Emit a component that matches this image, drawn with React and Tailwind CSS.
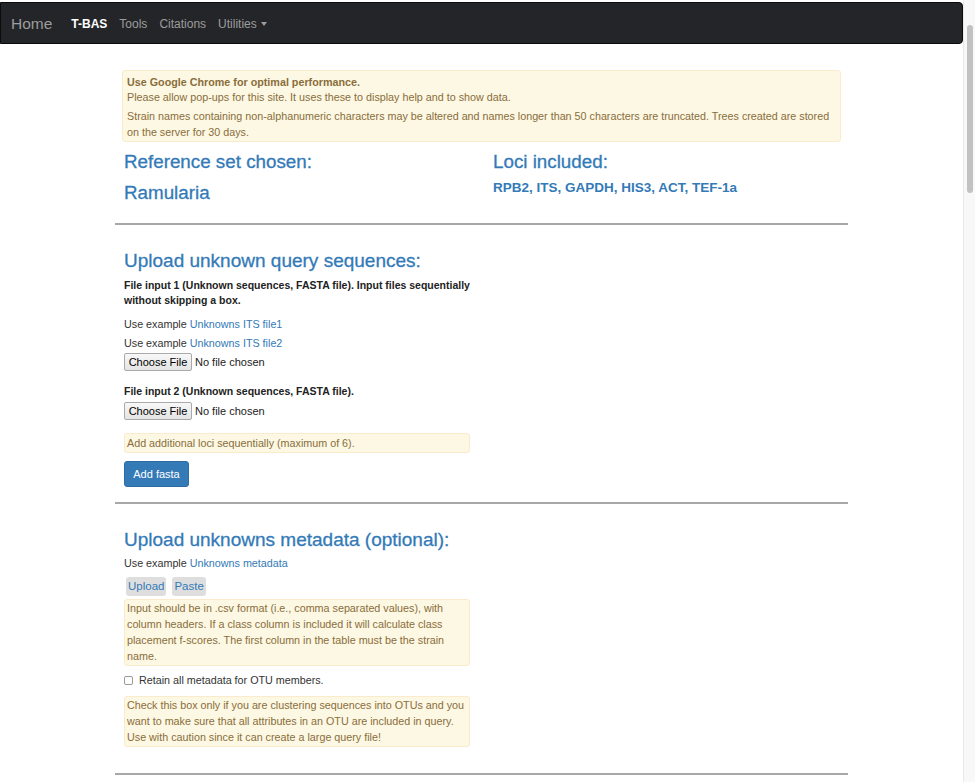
export default function App() {
  const alertCls = "bg-[#fcf8e3] border border-[#faebcc] text-[#8a6d3b] rounded-[3px]";
  const link = "text-[#337ab7]";
  const head = "text-[#337ab7] [-webkit-text-stroke:0.3px_#337ab7]";

  const FileInput = () => (
    <div className="flex items-center h-[18px] text-[11px] text-[#222]">
      <span className="h-[18px] w-[68px] flex items-center justify-center border border-[#a9a9a9] rounded-[2px] bg-gradient-to-b from-[#f8f8f8] to-[#e4e4e4] text-black">
        Choose File
      </span>
      <span className="ml-[3px]">No file chosen</span>
    </div>
  );

  return (
    <div
      className="flex h-[782px] overflow-hidden bg-white text-[#333]"
      style={{ fontFamily: '"Liberation Sans", Arial, sans-serif' }}
    >
      <div className="flex-1 min-w-0 pt-[2px]">
        {/* navbar */}
        <nav className="h-[42px] bg-[#242528] border border-[#0b0b0b] rounded-r-[4px] flex items-center pl-[10px] pt-[2px]">
          <span className="text-[15.5px] text-[#9d9d9d]">Home</span>
          <div className="flex items-center gap-[12px] ml-[19px] text-[12px] text-[#9d9d9d]">
            <span className="text-white font-bold">T-BAS</span>
            <span>Tools</span>
            <span>Citations</span>
            <span className="flex items-center">
              Utilities
              <span className="ml-[4px] w-0 h-0 border-l-[3.5px] border-r-[3.5px] border-t-[4px] border-l-transparent border-r-transparent border-t-[#9d9d9d]" />
            </span>
          </div>
        </nav>

        <div className="ml-[115px] w-[733px]">
          <div className="px-[7px] pt-[26px]">
            <div className={`${alertCls} px-[4px] pt-[4px] pb-[1px] text-[10.75px]`}>
              <div className="leading-[15px]">
                <b>Use Google Chrome for optimal performance.</b>
                <br />
                Please allow pop-ups for this site. It uses these to display help and to show data.
              </div>
              <div className="leading-[16px] mt-[3px]">
                Strain names containing non-alphanumeric characters may be altered and names longer than 50 characters are truncated. Trees created are stored on the server for 30 days.
              </div>
            </div>
          </div>

          <div className="grid grid-cols-[369px_1fr] px-[9px] mt-[9px]">
            <div>
              <h3 className={`text-[18.8px] leading-[22px] ${head}`}>Reference set chosen:</h3>
              <h3 className={`text-[18.8px] leading-[22px] mt-[9px] ${head}`}>Ramularia</h3>
            </div>
            <div>
              <h3 className={`text-[18.8px] leading-[22px] ${head}`}>Loci included:</h3>
              <div className="text-[13.5px] leading-[18px] font-bold text-[#337ab7] mt-[6px]">
                RPB2, ITS, GAPDH, HIS3, ACT, TEF-1a
              </div>
            </div>
          </div>

          <div className="h-[2px] bg-[#a8a8a8] mt-[19px]" />

          <div className="px-[9px] w-[364px]">
            <h2 className={`text-[19px] leading-[24px] mt-[24px] ${head}`}>Upload unknown query sequences:</h2>
            <div className="text-[10.5px] leading-[15px] font-bold text-[#222] mt-[5px]">
              File input 1 (Unknown sequences, FASTA file). Input files sequentially without skipping a box.
            </div>
            <div className="text-[10.75px] leading-[16px] mt-[8px]">
              Use example <span className={link}>Unknowns ITS file1</span>
            </div>
            <div className="text-[10.75px] leading-[16px] mt-[3px]">
              Use example <span className={link}>Unknowns ITS file2</span>
            </div>
            <div className="mt-[2px]">
              <FileInput />
            </div>
            <div className="text-[10.5px] leading-[15px] font-bold text-[#222] mt-[13px]">
              File input 2 (Unknown sequences, FASTA file).
            </div>
            <div className="mt-[3px]">
              <FileInput />
            </div>
            <div className={`${alertCls} mt-[13px] h-[20px] flex items-center px-[2px] text-[10.75px]`}>
              Add additional loci sequentially (maximum of 6).
            </div>
            <button className="mt-[8px] h-[26px] w-[65px] bg-[#337ab7] border border-[#2e6da4] rounded-[3px] text-white text-[11px]">
              Add fasta
            </button>
          </div>

          <div className="h-[2px] bg-[#a8a8a8] mt-[15px]" />

          <div className="px-[9px] w-[364px]">
            <h2 className={`text-[19px] leading-[24px] mt-[24px] ${head}`}>Upload unknowns metadata (optional):</h2>
            <div className="text-[10.75px] leading-[16px] mt-[3px]">
              Use example <span className={link}>Unknowns metadata</span>
            </div>
            <div className="flex gap-[6px] ml-[2px] mt-[6px]">
              <span className="h-[19px] px-[2px] flex items-center bg-[#dedede] rounded-[3px] text-[11.5px] text-[#337ab7]">Upload</span>
              <span className="h-[19px] px-[2px] flex items-center bg-[#dedede] rounded-[3px] text-[11.5px] text-[#337ab7]">Paste</span>
            </div>
            <div className={`${alertCls} mt-[3px] px-[2px] pb-[1px] text-[10.75px] leading-[16px]`}>
              Input should be in .csv format (i.e., comma separated values), with column headers. If a class column is included it will calculate class placement f-scores. The first column in the table must be the strain name.
            </div>
            <label className="flex items-center mt-[6px] text-[10.75px] leading-[16px]">
              <span className="w-[9px] h-[9px] border border-[#9a9a9a] rounded-[2px] bg-white" />
              <span className="ml-[6px]">Retain all metadata for OTU members.</span>
            </label>
            <div className={`${alertCls} mt-[8px] px-[2px] pb-[1px] text-[10.75px] leading-[16px]`}>
              Check this box only if you are clustering sequences into OTUs and you want to make sure that all attributes in an OTU are included in query. Use with caution since it can create a large query file!
            </div>
          </div>

          <div className="h-[2px] bg-[#a8a8a8] mt-[26px]" />
        </div>
      </div>

      {/* scrollbar */}
      <div className="w-[12px] bg-[#f8f8f8] border-l border-[#e8e8e8] pt-[25px] flex justify-center">
        <div className="w-[6px] h-[168px] rounded-full bg-[#c2c2c2]" />
      </div>
    </div>
  );
}
